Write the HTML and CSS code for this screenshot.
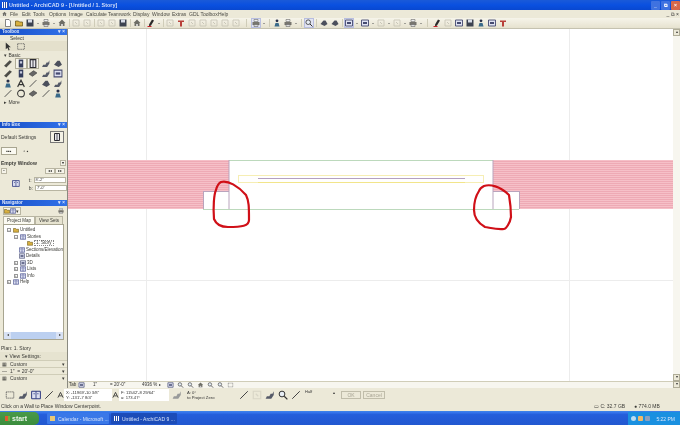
FILE: index.html
```html
<!DOCTYPE html>
<html lang="en">
<head>
<meta charset="UTF-8">
<title>Untitled - ArchiCAD 9</title>
<link rel="stylesheet" href="styles.css">
</head>
<body>

<svg class="defs" width="0" height="0">
    <symbol id="doc" viewBox="0 0 8 8"><path d="M1.500 .5h3.500l1.500 1.500v5.500h-5z" fill="#fff" stroke="#555" stroke-width=".7"/></symbol>
    <symbol id="folder" viewBox="0 0 8 8"><path d="M.5 2h3l1 1h3v4h-7z" fill="#d8b040" stroke="#5c4a10" stroke-width=".7"/></symbol>
    <symbol id="disk" viewBox="0 0 8 8"><path d="M.5 .5h7v7h-7z" fill="#3c4250"/><path d="M2 .5h4v3h-4z" fill="#d8dde8"/></symbol>
    <symbol id="print" viewBox="0 0 8 8"><path d="M2 .5h4v2h-4z" fill="#eee" stroke="#555" stroke-width=".5"/><path d="M.5 3h7v3h-7z" fill="#77756e"/><path d="M2 5.500h4v2h-4z" fill="#ddd" stroke="#555" stroke-width=".5"/></symbol>
    <symbol id="house" viewBox="0 0 8 8"><path d="M.5 4l3.500-3.500 3.500 3.500h-1v3h-5v-3z" fill="#6d6d66"/><path d="M3 5h2v2h-2z" fill="#ccc"/></symbol>
    <symbol id="frame" viewBox="0 0 8 8"><path d="M.5 1h7v6h-7z" fill="#dfe2f2" stroke="#454a70" stroke-width=".9"/><path d="M2 3h4v2h-4z" fill="#454a70"/></symbol>
    <symbol id="faint" viewBox="0 0 8 8"><path d="M1 1h6v6h-6z" fill="none" stroke="#c9c6b8" stroke-width=".9"/><path d="M3 3l2 2" stroke="#c9c6b8"/></symbol>
    <symbol id="pen" viewBox="0 0 8 8"><path d="M5 .5l2 1-3 5-2 1 .2-2.300z" fill="#2a2a2a"/><path d="M.5 7.500h4" stroke="#c8202a"/></symbol>
    <symbol id="redtool" viewBox="0 0 8 8"><path d="M1 1.500h6v1.500h-2v4.500h-2v-4.500h-2z" fill="#b8403a"/></symbol>
    <symbol id="person" viewBox="0 0 8 8"><circle cx="4" cy="1.800" r="1.400" fill="#28304a"/><path d="M1.500 7.500l1-3.500h3l1 3.500z" fill="#3a6a8a"/></symbol>
    <symbol id="arrow" viewBox="0 0 8 8"><path d="M2 .5v6l1.500-1.500 1 2.500 1-.5-1-2.300h2z" fill="#333"/></symbol>
    <symbol id="marquee" viewBox="0 0 8 8"><path d="M1 1.500h6v5h-6z" fill="none" stroke="#555" stroke-width=".7" stroke-dasharray="1 .6"/></symbol>
    <symbol id="wall" viewBox="0 0 8 8"><path d="M.5 6l5-5 2 1.500-5 5z" fill="#4d4d48"/></symbol>
    <symbol id="column" viewBox="0 0 8 8"><path d="M2 .5h4v7h-4z" fill="#343c5c"/><path d="M3 2h2v2h-2z" fill="#c9cde0"/></symbol>
    <symbol id="door" viewBox="0 0 8 8"><path d="M1.500 .5h5v7h-5z" fill="#e8e8ee" stroke="#2c2c34" stroke-width="1"/><path d="M4 .5v7" stroke="#2c2c34" stroke-width=".8"/></symbol>
    <symbol id="stair" viewBox="0 0 8 8"><path d="M.5 7l1-2h2l1-2h1.500l1-2v3l-2 3z" fill="#555a68"/></symbol>
    <symbol id="roof" viewBox="0 0 8 8"><path d="M.5 5l3-3.500h2l2 3.500-3 2z" fill="#4b4f5c"/></symbol>
    <symbol id="slab" viewBox="0 0 8 8"><path d="M.5 4.500l4-3 3 2-4 3z" fill="#666" stroke="#333" stroke-width=".5"/></symbol>
    <symbol id="label" viewBox="0 0 8 8"><path d="M1 7l3-6 3 6M2.500 5h3" fill="none" stroke="#333" stroke-width="1"/></symbol>
    <symbol id="line" viewBox="0 0 8 8"><path d="M1 7l6-6" stroke="#444" stroke-width=".8"/></symbol>
    <symbol id="circle" viewBox="0 0 8 8"><circle cx="4" cy="4" r="3" fill="none" stroke="#333" stroke-width=".9"/></symbol>
    <symbol id="zoomi" viewBox="0 0 8 8"><circle cx="3.200" cy="3.200" r="2.300" fill="#e7eef6" stroke="#333" stroke-width=".8"/><path d="M5 5l2.500 2.500" stroke="#333" stroke-width="1"/></symbol>
    <symbol id="book" viewBox="0 0 8 8"><path d="M.5 1h7v6h-7z" fill="#dcdff0" stroke="#2f3a80" stroke-width=".8"/><path d="M4 1v6M2 3h1M5 3h1" stroke="#2f3a80" stroke-width=".7"/></symbol>
</svg>

<div class="window">

    <div class="titlebar">
        <span class="app-icon"></span>
        <span class="title">Untitled - ArchiCAD 9 - [Untitled / 1. Story]</span>
        <span class="winbtns">
            <span class="winbtn">&#95;</span><span class="winbtn">&#10697;</span><span class="winbtn close">&#215;</span>
        </span>
    </div>

    <div class="menubar">
        <svg class="menu-icon"><use href="#house"/></svg>
        <span class="m1">File</span><span class="m2">Edit</span><span class="m3">Tools</span><span class="m4">Options</span><span class="m5">Image</span><span class="m6">Calculate</span><span class="m7">Teamwork</span><span class="m8">Display</span><span class="m9">Window</span><span class="m10">Extras</span><span class="m11">GDL Toolbox</span><span class="m12">Help</span>
        <span class="mdi">&#95; &#10697; &#215;</span>
    </div>

    <div class="toolbar">
        <svg class="ti"><use href="#doc"/></svg>
        <svg class="ti"><use href="#folder"/></svg>
        <svg class="ti"><use href="#disk"/></svg><i class="drop"></i>
        <svg class="ti"><use href="#print"/></svg><i class="drop"></i>
        <svg class="ti"><use href="#house"/></svg><i class="sep"></i>
        <svg class="ti"><use href="#faint"/></svg><svg class="ti"><use href="#faint"/></svg><i class="sep"></i>
        <svg class="ti"><use href="#faint"/></svg><svg class="ti"><use href="#faint"/></svg>
        <svg class="ti"><use href="#disk"/></svg><i class="sep"></i>
        <svg class="ti"><use href="#house"/></svg><i class="sep"></i>
        <svg class="ti"><use href="#pen"/></svg><i class="drop"></i><i class="sep"></i>
        <svg class="ti"><use href="#faint"/></svg>
        <svg class="ti"><use href="#redtool"/></svg>
        <svg class="ti"><use href="#faint"/></svg><svg class="ti"><use href="#faint"/></svg><svg class="ti"><use href="#faint"/></svg><svg class="ti"><use href="#faint"/></svg><svg class="ti"><use href="#faint"/></svg><i class="sep w4"></i>
        <svg class="ti hl"><use href="#print"/></svg><i class="drop"></i><i class="sep w2"></i>
        <svg class="ti"><use href="#person"/></svg>
        <svg class="ti"><use href="#print"/></svg><i class="drop"></i>
        <i class="sep w2"></i>
        <svg class="ti hl"><use href="#zoomi"/></svg><i class="sep w1"></i>
        <svg class="ti"><use href="#roof"/></svg><svg class="ti"><use href="#roof"/></svg><i class="sep"></i>
        <svg class="ti hl"><use href="#frame"/></svg><i class="drop"></i>
        <svg class="ti"><use href="#frame"/></svg><i class="drop"></i>
        <svg class="ti"><use href="#faint"/></svg><i class="drop"></i>
        <svg class="ti"><use href="#faint"/></svg><i class="drop"></i>
        <svg class="ti"><use href="#print"/></svg><i class="drop"></i><i class="sep w3"></i>
        <svg class="ti"><use href="#pen"/></svg>
        <svg class="ti"><use href="#faint"/></svg>
        <svg class="ti"><use href="#frame"/></svg>
        <svg class="ti"><use href="#disk"/></svg>
        <svg class="ti"><use href="#person"/></svg>
        <svg class="ti"><use href="#frame"/></svg>
        <svg class="ti"><use href="#redtool"/></svg>
    </div>

    <div class="middle">

        <div class="sidebar">
            <div class="panel-head">Toolbox<span>&#9662; &#215;</span></div>
            <div class="select-label">Select</div>
            <div class="select-row">
                <svg class="tool"><use href="#arrow"/></svg>
                <svg class="tool"><use href="#marquee"/></svg>
            </div>
            <div class="section">&#9662; Basic</div>
            <div class="toolgrid">
                <svg class="tool"><use href="#wall"/></svg>
                <svg class="tool sel"><use href="#column"/></svg>
                <svg class="tool sel"><use href="#door"/></svg>
                <svg class="tool"><use href="#stair"/></svg>
                <svg class="tool"><use href="#roof"/></svg>
                <svg class="tool"><use href="#wall"/></svg>
                <svg class="tool"><use href="#column"/></svg>
                <svg class="tool"><use href="#slab"/></svg>
                <svg class="tool"><use href="#stair"/></svg>
                <svg class="tool"><use href="#frame"/></svg>
                <svg class="tool"><use href="#person"/></svg>
                <svg class="tool"><use href="#label"/></svg>
                <svg class="tool"><use href="#line"/></svg>
                <svg class="tool"><use href="#roof"/></svg>
                <svg class="tool"><use href="#stair"/></svg>
                <svg class="tool"><use href="#line"/></svg>
                <svg class="tool"><use href="#circle"/></svg>
                <svg class="tool"><use href="#slab"/></svg>
                <svg class="tool"><use href="#line"/></svg>
                <svg class="tool"><use href="#person"/></svg>
            </div>
            <div class="section more">&#9656; More</div>

            <div class="panel-head infobox">Info Box<span>&#9662; &#215;</span></div>
            <div class="default-row">Default Settings<svg class="bigbtn"><use href="#door"/></svg></div>
            <div class="toggle-row"><span class="toggle on">&#9642;&#9642;&#9642;</span><span class="toggle">&#9643; &#9642;</span></div>
            <div class="empty-row">Empty Window<i class="mini">&#9662;</i></div>
            <div class="nav-row"><i class="mini">&#8226;</i><span class="grow"></span><i class="mini wide">&#9666;&#9666;</i><i class="mini wide">&#9656;&#9656;</i></div>
            <div class="size-row">
                <svg class="size-icon"><use href="#book"/></svg>
                <div class="size-fields">
                    <label>t:<span class="field">8'-2"</span></label>
                    <label>b:<span class="field">7'-0"</span></label>
                </div>
            </div>

            <div class="panel-head navigator">Navigator<span>&#9662; &#215;</span></div>
            <div class="nav-tools"><span class="navbtn"><svg class="navicon"><use href="#folder"/></svg><svg class="navicon"><use href="#book"/></svg>&#9662;</span><svg class="navicon"><use href="#print"/></svg></div>
            <div class="tabs"><span class="tab active">Project Map</span><span class="tab">View Sets</span></div>
            <div class="tree">
                <div class="node l0"><b>-</b><svg class="tn"><use href="#folder"/></svg>Untitled</div>
                <div class="node l1"><b>-</b><svg class="tn"><use href="#book"/></svg>Stories</div>
                <div class="node l2"><svg class="tn"><use href="#folder"/></svg><em>1. Story</em></div>
                <div class="node l1 leaf"><svg class="tn"><use href="#book"/></svg>Sections/Elevation</div>
                <div class="node l1 leaf"><svg class="tn"><use href="#frame"/></svg>Details</div>
                <div class="node l1"><b>+</b><svg class="tn"><use href="#frame"/></svg>3D</div>
                <div class="node l1"><b>+</b><svg class="tn"><use href="#book"/></svg>Lists</div>
                <div class="node l1"><b>+</b><svg class="tn"><use href="#book"/></svg>Info</div>
                <div class="node top"><b>+</b><svg class="tn"><use href="#book"/></svg>Help</div>
                <div class="hscroll"><i>&#9666;</i><span></span><i>&#9656;</i></div>
            </div>
            <div class="plan">Plan: 1. Story</div>
            <div class="viewset">&#9662; View Settings:</div>
            <div class="combo"><i class="glyph">&#9638;</i><span>Custom</span><i>&#9662;</i></div>
            <div class="combo"><i class="glyph">&#8212;</i><span>1" &nbsp;= 20'-0"</span><i>&#9662;</i></div>
            <div class="combo"><i class="glyph">&#9638;</i><span>Custom</span><i>&#9662;</i></div>
        </div>

        <div class="drawing">
            <svg class="plan-view" viewBox="0 0 605 352">
                <defs>
                    <pattern id="hatch" width="3" height="2" patternUnits="userSpaceOnUse">
                        <rect width="3" height="2" fill="#f6c0c8"/>
                        <rect width="3" height="1" fill="#eeaab5"/>
                    </pattern>
                </defs>
                <g fill="none" stroke="#ececec">
                    <path d="M78.500 0V352M501.500 0V352M0 251.500H605"/>
                </g>
                <path d="M0 131H161V162H135V180H0z" fill="url(#hatch)"/>
                <path d="M425 131H605V180H451V162H425z" fill="url(#hatch)"/>
                <path d="M161 131.500H425M135 180.500H451" stroke="#bcd9bc" fill="none"/>
                <path d="M161 131V180M135.500 162V180M135 162.500H161M425 131V180M451.500 162V180M425 162.500H451" stroke="#b9a4bd" fill="none"/>
                <path d="M170 146.500H416M170 153.500H416M170.500 146V154M415.500 146V154" stroke="#f6eeb4" fill="none"/>
                <path d="M190 153.500H397" stroke="#f2e58a" fill="none"/>
                <path d="M190 149.500H397" stroke="#b49fc0" fill="none"/>
                <path class="mark" d="M153 153C160 151 170 157 178 166C181 172 181 178 181 191C181 197 174 198 160 198C152 198 148 195 146 190C145 178 146 165 148 161C149 157 151 154 153 153Z"/>
                <path class="mark" d="M416 157C422 155 432 157 441 166C442 172 443 180 443 188C442 194 438 200 436 200C430 201 423 199 417 198C410 194 406 188 406 181C406 172 409 165 411 162C412 159 414 158 416 157Z"/>
            </svg>
            <div class="vscroll"><i>&#9652;</i><span></span><i>&#9662;</i><i>&#9662;</i></div>
            <div class="view-strip">
                <span class="strip-tab">Tab</span><svg class="si"><use href="#frame"/></svg>
                <span class="strip-val s1">1"</span><span class="strip-val s2">= 20'-0"</span><span class="strip-val s3">4936 %</span><i class="strip-arrow">&#9656;</i>
                <svg class="si"><use href="#frame"/></svg><svg class="si"><use href="#zoomi"/></svg><svg class="si"><use href="#zoomi"/></svg><svg class="si"><use href="#house"/></svg><svg class="si"><use href="#zoomi"/></svg><svg class="si"><use href="#zoomi"/></svg><svg class="si"><use href="#marquee"/></svg>
            </div>
        </div>

    </div>

    <div class="coordbar">
        <svg class="cb"><use href="#marquee"/></svg>
        <svg class="cb"><use href="#stair"/></svg>
        <svg class="cb"><use href="#book"/></svg>
        <svg class="cb"><use href="#line"/></svg>
        <svg class="cb small"><use href="#label"/></svg>
        <div class="coords"><span>X: -11969'-10 3/8"</span><span>Y: -131'-7 8/4"</span></div>
        <svg class="cb small"><use href="#label"/></svg>
        <div class="coords c2"><span>F: 11542'-8 29/64"</span><span>a: 173.47&deg;</span></div>
        <svg class="cb dim"><use href="#stair"/></svg>
        <div class="coords c3"><span>A: 0&deg;</span><span>to Project Zero</span></div>
        <svg class="cb"><use href="#line"/></svg>
        <svg class="cb dim"><use href="#faint"/></svg>
        <svg class="cb"><use href="#stair"/></svg>
        <svg class="cb"><use href="#zoomi"/></svg>
        <svg class="cb"><use href="#line"/></svg>
        <span class="half">Half</span>
        <i class="halfdrop">&#9652;</i>
        <span class="cbtn">OK</span><span class="cbtn last">Cancel</span>
    </div>

    <div class="statusbar">
        <span class="hint">Click on a Wall to Place Window Centerpoint.</span>
        <span class="disk">&#9645; C: 32.7 GB</span>
        <span class="mem">&#9679; 774.0 MB</span>
    </div>

    <div class="taskbar">
        <span class="start"><i class="flag"></i>start</span>
        <span class="task first"><i class="task-icon cal"></i>Calendar - Microsoft ...</span>
        <span class="task current"><i class="task-icon"></i>Untitled - ArchiCAD 9 ...</span>
        <span class="tray"><i class="dot blue"></i><i class="dot orange"></i><i class="dot grey"></i><span class="clock">5:22 PM</span></span>
    </div>

</div>

</body>
</html>
```

FILE: styles.css
```css
* { margin: 0; padding: 0; box-sizing: border-box; }
body { overflow: hidden; background: #ece9d8; }
i { font-style: normal; }

.defs { position: absolute; }

.window {
    display: flex;
    flex-direction: column;
    width: 680px;
    height: 425px;
    font-family: "Liberation Sans", Arial, sans-serif;
    font-size: 5px;
    line-height: 6px;
    color: #333;
    background: #ece9d8;
    overflow: hidden;
    filter: blur(.3px);
}

/* title + menu */
.titlebar {
    display: flex;
    align-items: center;
    height: 10px;
    padding-left: 2px;
    background: linear-gradient(#1a5ad8, #0a50e0 50%, #0848d0);
    color: #cfdcf8;
    font-size: 5.450px;
    font-weight: bold;
}
.app-icon {
    width: 6px;
    height: 6px;
    margin-right: 1px;
    background: repeating-linear-gradient(90deg, #fff 0 1px, #2a50a8 1px 2px);
}
.winbtns { display: flex; gap: 1px; margin-left: auto; }
.winbtn {
    width: 9px;
    height: 9px;
    border-radius: 1px;
    background: #3f72e0;
    color: #fff;
    text-align: center;
    line-height: 8px;
    font-size: 5px;
}
.winbtn.close { background: #d8684a; }

.menubar {
    position: relative;
    display: flex;
    align-items: center;
    height: 8px;
    padding-left: 2px;
    background: #ece9d8;
    color: #4a4a44;
}
.menu-icon { width: 5px; height: 6px; margin-right: 3px; }
.menubar span { white-space: nowrap; }
.m1 { width: 12px; }
.m2 { width: 11px; }
.m3 { width: 16px; }
.m4 { width: 20px; }
.m5 { width: 17px; }
.m6 { width: 22px; }
.m7 { width: 25px; }
.m8 { width: 19px; }
.m9 { width: 20px; }
.m10 { width: 17px; }
.m11 { width: 29px; }
.m12 { width: 14px; }
.menubar .mdi { margin-left: auto; margin-right: 1px; font-size: 5px; color: #333; }

.toolbar {
    display: flex;
    align-items: center;
    height: 11px;
    padding-left: 2.500px;
    background: linear-gradient(#f6f4ea, #e6e2cf);
    border-bottom: 1px solid #c5c2b0;
}
.ti { width: 8px; height: 8px; margin: 0 1.500px; flex: none; }
.ti.hl { outline: 1px solid #b8bee0; background: #e2e4f2; }
.drop { width: 0; height: 0; margin: 0 2px 0 1px; border: 1.500px solid transparent; border-top-color: #555; border-bottom: 0; flex: none; }
.sep { width: 1px; height: 8px; margin: 0 1px; background: #cfccb8; flex: none; }
.sep.w1 { margin: 0 1.500px; }
.sep.w2 { margin: 0 2px; }
.sep.w3 { margin: 0 3.500px; }
.sep.w4 { margin: 0 4px; }

/* left column */
.middle { display: flex; flex: 1; min-height: 0; }
.sidebar {
    width: 68px;
    flex: none;
    display: flex;
    flex-direction: column;
    background: #ece9d8;
    border-right: 1px solid #8a8a80;
    color: #3a3a36;
}
.panel-head {
    display: flex;
    justify-content: space-between;
    height: 6px;
    padding: 0 2px;
    background: linear-gradient(90deg, #1850c8, #3070e8);
    color: #dfe8fb;
    font-weight: bold;
    font-size: 4.500px;
    line-height: 6px;
    flex: none;
}
.select-label { height: 6px; padding-left: 10px; }
.select-row { display: flex; gap: 1px; height: 10px; padding: .5px 0 0 2px; background: #e4e0cc; }
.section { height: 6px; margin-top: 1px; padding-left: 4px; }
.toolgrid { display: grid; grid-template-columns: repeat(5, 12.500px); grid-auto-rows: 10px; margin: 0 0 0 2px; }
.tool { width: 10px; height: 9px; margin: .5px 1px; }
.tool.sel { outline: 1px solid #b0ad98; background: #f5f3e8; }
.section.more { margin-top: 1px; }

.infobox { margin-top: 17px; }
.default-row { display: flex; align-items: center; justify-content: space-between; height: 14px; margin-top: 2px; padding: 0 3px 0 1px; }
.bigbtn { width: 14px; height: 12px; padding: 1px; background: #f4f2e6; border: 1px solid #777; }
.toggle-row { display: flex; gap: 1px; height: 8px; margin: 3px 0 0 1px; }
.toggle { width: 16px; text-align: center; line-height: 8px; }
.toggle.on { background: #fbfaf2; border: 1px solid #a8a590; line-height: 6px; }
.empty-row { display: flex; justify-content: space-between; align-items: center; height: 7px; margin-top: 4px; padding: 0 1px; font-weight: bold; }
.mini { width: 6px; height: 6px; background: #f6f4ea; border: 1px solid #b8b5a2; text-align: center; font-size: 4px; line-height: 4px; }
.mini.wide { width: 10px; }
.nav-row { display: flex; height: 7px; margin-top: 2px; padding: 0 2px 0 1px; }
.grow { flex: 1; }
.size-row { display: flex; align-items: center; gap: 9px; height: 15px; margin-top: 1px; padding-left: 12px; }
.size-icon { width: 10px; height: 11px; }
.size-fields { display: flex; flex-direction: column; gap: 2px; }
.size-fields label { display: flex; gap: 2px; align-items: center; }
.field { width: 32px; height: 6px; background: #fff; border: 1px solid #b8b5a2; line-height: 4px; font-size: 4px; padding-left: 1px; }

.navigator { margin-top: 9px; }
.nav-tools { display: flex; justify-content: space-between; align-items: center; height: 8px; margin-top: 1px; padding: 0 3px; }
.navbtn { display: flex; align-items: center; border: 1px solid #b8b5a2; background: #f6f4ea; padding-right: 1px; }
.navicon { width: 6px; height: 6px; }
.tabs { display: flex; height: 8px; margin-top: 1px; padding-left: 3px; }
.tab { padding: 1px 3px 0; border: 1px solid #b8b5a2; border-bottom: 0; background: #e6e3d0; font-size: 4.500px; }
.tab.active { background: #fbfaf2; }
.tree {
    position: relative;
    height: 116px;
    margin: 0 3px;
    padding: 2px 0 0 3px;
    background: #fff;
    border: 1px solid #a8a590;
    flex: none;
}
.node { display: flex; align-items: center; gap: 1px; height: 6.500px; white-space: nowrap; font-size: 4.500px; }
.node b { width: 4px; height: 4px; margin-right: 1px; border: 1px solid #999; font-weight: normal; font-size: 3px; line-height: 2px; text-align: center; }
.tn { width: 6px; height: 6px; flex: none; }
.node.l0 { padding-left: 0; }
.node.l1 { padding-left: 7px; }
.node.l2 { padding-left: 20px; }
.node.leaf { padding-left: 12px; }
.node em { font-style: normal; border: 1px dotted #888; padding: 0 1px; line-height: 4px; }
.hscroll {
    position: absolute;
    left: 0;
    right: 0;
    bottom: 0;
    display: flex;
    height: 7px;
    background: #e4ebf6;
}
.hscroll span { flex: 1; background: #bcd0f0; }
.hscroll i { width: 7px; text-align: center; background: #d8e2f5; font-size: 4px; }
.plan { margin-top: 5px; padding-left: 1px; }
.viewset { margin-top: 1px; padding: 1px 0 1px 5px; background: #e6e3d0; height: 8px; }
.combo { display: flex; align-items: center; gap: 2px; height: 7px; padding: 0 2px; border-top: 1px solid #d0cdb8; }
.combo span { flex: 1; }
.combo .glyph { width: 6px; }

/* drawing area */
.drawing { position: relative; flex: 1; background: #fff; }
.plan-view { display: block; width: 605px; height: 352px; }
.mark { fill: none; stroke: #d01018; stroke-width: 2.200px; stroke-linejoin: round; }
.vscroll {
    position: absolute;
    top: 0;
    right: 0;
    bottom: 0;
    width: 7px;
    display: flex;
    flex-direction: column;
    background: #f7f6ef;
    font-size: 4px;
    text-align: center;
}
.vscroll span { flex: 1; }
.vscroll i { height: 7px; background: #ece9d8; border: 1px solid #b0ad98; line-height: 4px; }
.view-strip {
    position: absolute;
    left: 0;
    right: 7px;
    bottom: 0;
    display: flex;
    align-items: center;
    height: 7px;
    background: #f7f6ef;
    border-top: 1px solid #d0cdb8;
}
.strip-tab { width: 10px; padding-left: 1px; background: #e6e3d0; font-size: 4.500px; }
.si { width: 7px; height: 6px; margin-right: 3px; flex: none; }
.strip-val { font-size: 4.500px; }
.s1 { width: 22px; padding-left: 5px; }
.s2 { width: 32px; }
.s3 { width: 17px; }
.strip-arrow { width: 6px; margin-right: 2px; font-size: 4px; }

/* bottom bars */
.coordbar {
    display: flex;
    align-items: center;
    height: 13px;
    padding-left: 5px;
    background: #ece9d8;
    flex: none;
}
.cb { width: 10px; height: 10px; margin-right: 3px; flex: none; }
.cb.small { width: 7px; height: 8px; margin-right: 0; }
.cb.dim { opacity: .55; }
.coords {
    display: flex;
    flex-direction: column;
    width: 48px;
    height: 12px;
    margin-right: 0;
    padding: 1px 0 0 2px;
    background: #fff;
    font-size: 4.200px;
    line-height: 5px;
    white-space: nowrap;
}
.coords.c2 { width: 50px; margin-right: 3px; }
.coords.c3 { width: 54px; background: transparent; }
.half { width: 28px; margin-left: 1px; font-size: 4px; margin-top: -5px; }
.halfdrop { width: 8px; font-size: 4px; margin-top: -3px; }
.cbtn {
    width: 20px;
    height: 8px;
    margin-right: 2px;
    border: 1px solid #c0bdaa;
    text-align: center;
    line-height: 6px;
    color: #a8a594;
}
.cbtn.last { width: 22px; }
.statusbar {
    display: flex;
    align-items: center;
    height: 10px;
    padding-left: 1px;
    background: #ece9d8;
    color: #3a3a36;
    flex: none;
}
.hint { flex: 1; }
.disk { width: 40px; }
.mem { width: 46px; }

.taskbar {
    display: flex;
    align-items: center;
    height: 14px;
    background: linear-gradient(#3a7af0, #245edb 20%, #2258d0);
    border-top: 1px solid #3c80e8;
    color: #d8e4fa;
    flex: none;
    font-size: 5px;
}
.start {
    display: flex;
    align-items: center;
    gap: 2px;
    width: 39px;
    height: 100%;
    padding-left: 5px;
    background: linear-gradient(#4a9a4a, #3a8c3c);
    border-radius: 0 5px 5px 0;
    color: #eaf4ea;
    font-size: 7px;
    font-weight: bold;
}
.flag { width: 5px; height: 5px; background: linear-gradient(90deg, #e05a30 50%, #70b040 50%); }
.task {
    display: flex;
    align-items: center;
    gap: 3px;
    width: 66px;
    height: 11px;
    padding-left: 3px;
    margin-left: 2px;
    background: #3a78e8;
    border-radius: 1px;
    white-space: nowrap;
    overflow: hidden;
}
.task.first { width: 62px; margin-left: 8px; }
.task.current { background: #1c4cb8; }
.task-icon { width: 5px; height: 5px; background: repeating-linear-gradient(90deg, #fff 0 1px, #2a50a8 1px 2px); flex: none; }
.task-icon.cal { background: #e8c878; }
.tray {
    display: flex;
    align-items: center;
    gap: 2px;
    height: 100%;
    margin-left: auto;
    padding: 0 5px 0 3px;
    background: #1a90e0;
}
.dot { width: 5px; height: 5px; border-radius: 1px; }
.dot.blue { background: #bcdcf0; border-radius: 50%; }
.dot.orange { background: #f0b868; }
.dot.grey { background: #8aa0c0; }
.clock { margin-left: 4px; }
```
